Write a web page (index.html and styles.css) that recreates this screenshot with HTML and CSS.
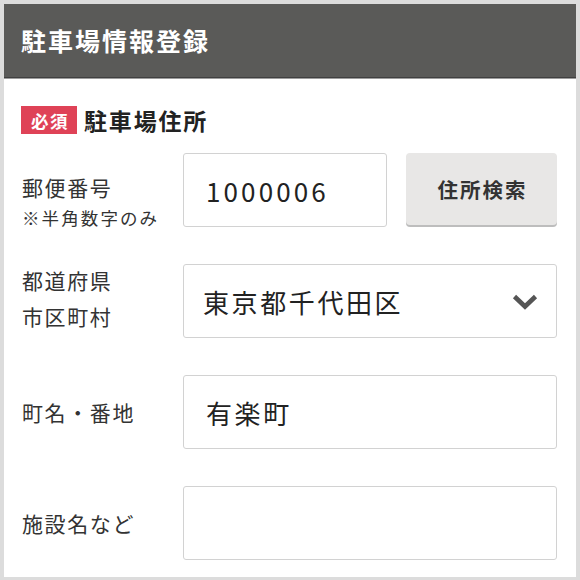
FILE: index.html
```html
<!DOCTYPE html>
<html lang="ja">
<head>
<meta charset="utf-8">
<title>駐車場情報登録</title>
<link rel="stylesheet" href="styles.css">
</head>
<body>
<div class="page">
  <header class="header"><h1 class="header-title">駐車場情報登録</h1></header>
  <section class="section">
    <div class="section-head">
      <span class="badge">必須</span>
      <h2 class="section-title">駐車場住所</h2>
    </div>
    <div class="row row-zip">
      <div class="label label-zip">
        <div class="label-main">郵便番号</div>
        <div class="label-note">※半角数字のみ</div>
      </div>
      <div class="field field-zip">
        <input class="input input-zip" type="text" value="1000006">
        <button class="btn" type="button">住所検索</button>
      </div>
    </div>
    <div class="row">
      <div class="label label-two">
        <div>都道府県</div>
        <div>市区町村</div>
      </div>
      <div class="field">
        <div class="select">
          <span class="select-text">東京都千代田区</span>
          <svg class="chevron" width="26" height="16" viewBox="0 0 26 16"><path d="M2.5 2.5 L13 12.5 L23.5 2.5" fill="none" stroke="#555" stroke-width="4.6" stroke-linejoin="miter" stroke-linecap="butt"/></svg>
        </div>
      </div>
    </div>
    <div class="row">
      <div class="label">町名・番地</div>
      <div class="field"><input class="input input-full" type="text" value="有楽町"></div>
    </div>
    <div class="row">
      <div class="label">施設名など</div>
      <div class="field"><input class="input input-full" type="text" value=""></div>
    </div>
  </section>
</div>
</body>
</html>
```

FILE: styles.css
```css
* { box-sizing: border-box; }
html, body { margin: 0; padding: 0; }
body {
  background: #dcdcdc;
  padding: 4px 4px 3px 4px;
  font-family: "Noto Sans CJK JP", "Noto Sans", sans-serif;
  color: #333;
  letter-spacing: 0.1em;
}
.page {
  background: #fff;
  height: 573px;
  overflow: hidden;
}
.header {
  height: 74px;
  background: #5a5a58;
  border-bottom: 1px solid #404040;
  box-shadow: 0 1px 0 #9c9c9c;
  display: flex;
  align-items: center;
  padding-left: 17px;
}
.header-title {
  margin: 0;
  color: #fff;
  font-size: 25px;
  font-weight: 700;
  line-height: 1;
  letter-spacing: 0.08em;
}
.section {
  padding: 28px 19px 0 13px;
}
.section-head {
  display: flex;
  align-items: center;
  height: 28px;
  gap: 7px;
}
.badge {
  display: flex;
  align-items: center;
  justify-content: center;
  width: 56px;
  height: 28px;
  margin-left: 4px;
  background: #df4257;
  color: #fff;
  font-size: 17.5px;
  font-weight: 700;
  letter-spacing: 0.08em;
  padding-left: 2px;
}
.section-title {
  margin: 0;
  font-size: 23px;
  font-weight: 700;
  color: #222;
  line-height: 1;
  letter-spacing: 0.08em;
}
.row {
  display: flex;
  align-items: center;
  height: 74px;
  margin-top: 37px;
}
.row-zip {
  margin-top: 19px;
  align-items: flex-start;
}
.label {
  width: 166px;
  flex: none;
  padding-left: 5px;
  font-size: 21px;
  line-height: 28px;
  color: #333;
}
.label-zip { padding-top: 20px; }
.label-main { line-height: 28px; }
.label-note {
  font-size: 17.5px;
  line-height: 24px;
  margin-top: 5px;
  letter-spacing: 0.12em;
}
.label-two { line-height: 36px; margin-top: -6px; }
.field {
  flex: 1;
  display: flex;
  gap: 19px;
  height: 74px;
}
.input {
  height: 74px;
  width: 204px;
  border: 1px solid #d2d2d2;
  border-radius: 3px;
  background: #fff;
  padding: 0 0 0 22px;
  font-family: "Noto Sans CJK JP", "Noto Sans", sans-serif;
  font-size: 26px;
  letter-spacing: 0.1em;
  color: #222;
  outline: none;
}
.input-zip { letter-spacing: 0.12em; }
.input-full { width: 100%; }
.btn {
  flex: 1;
  height: 72px;
  border: none;
  border-radius: 4px;
  background: #e8e7e6;
  box-shadow: 0 2px 0 #bdbdbd;
  font-family: "Noto Sans CJK JP", "Noto Sans", sans-serif;
  font-size: 20.5px;
  font-weight: 700;
  color: #333;
  letter-spacing: 0.1em;
  padding: 0 0 0 2px;
}
.select {
  flex: 1;
  height: 74px;
  border: 1px solid #d2d2d2;
  border-radius: 3px;
  display: flex;
  align-items: center;
  justify-content: space-between;
  padding: 0 18px 0 19px;
}
.select-text {
  font-size: 26px;
  color: #222;
  letter-spacing: 0.1em;
}
.chevron { display: block; margin-top: 1px; }
```
